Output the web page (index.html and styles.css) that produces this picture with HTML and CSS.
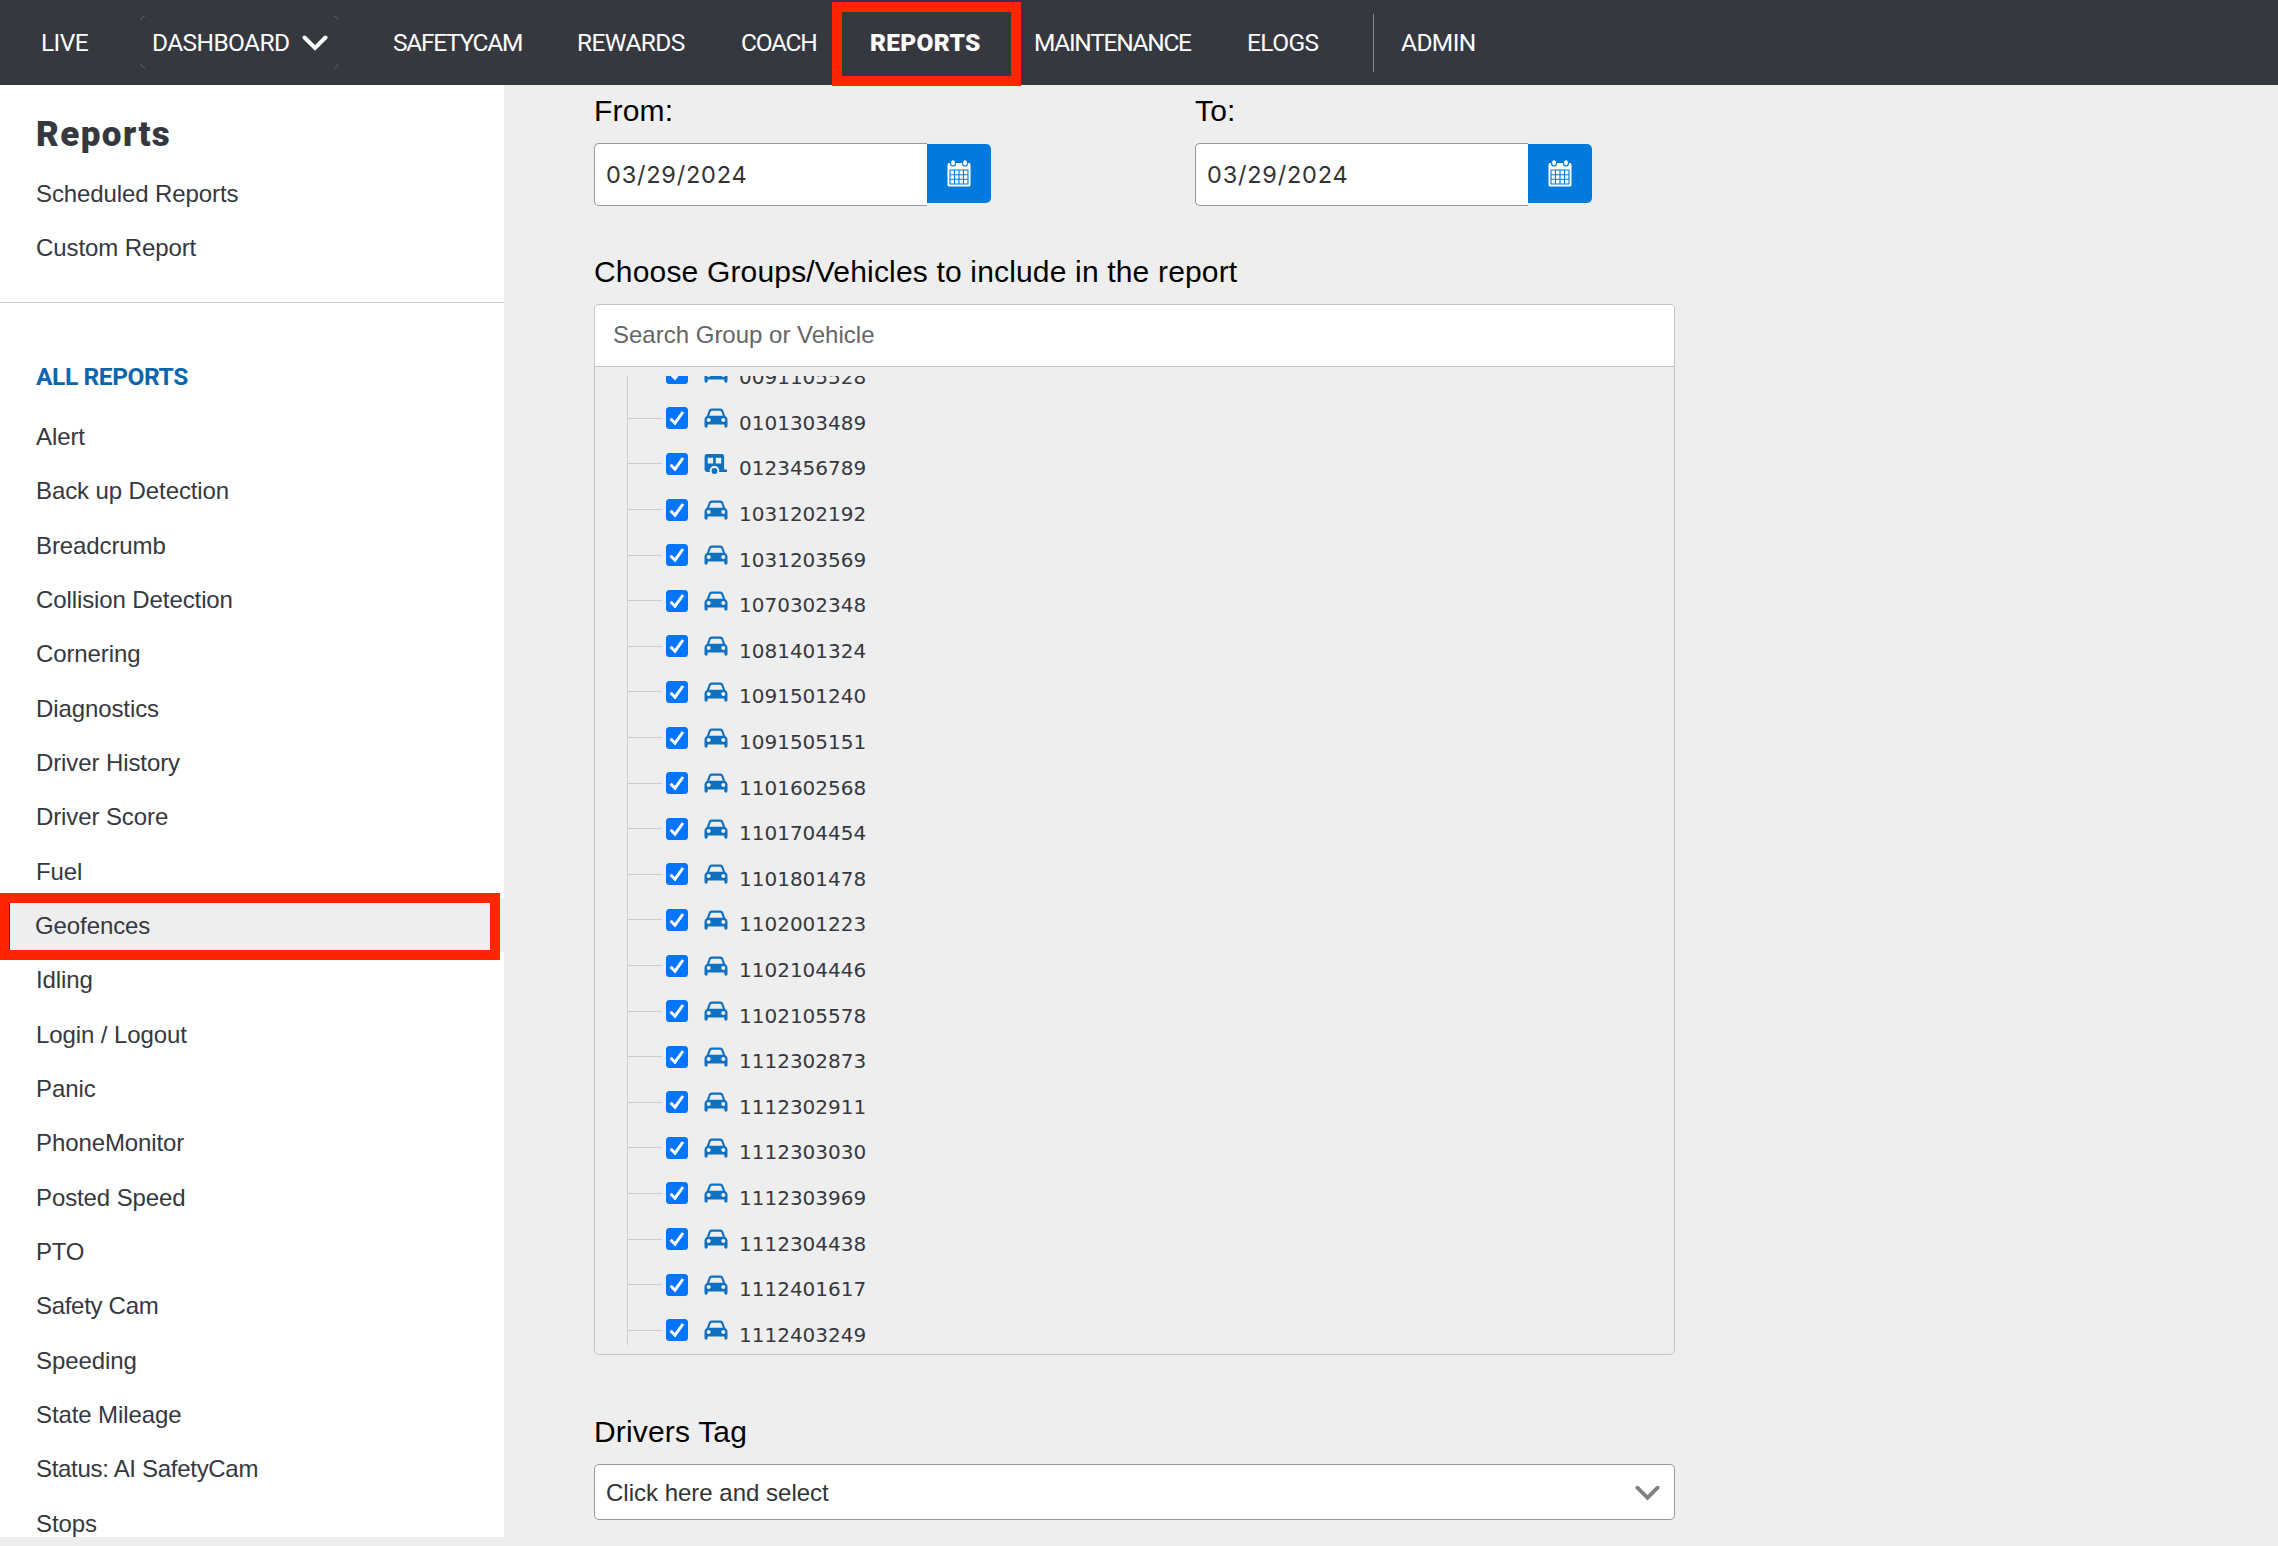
FILE: index.html
```html
<!DOCTYPE html>
<html lang="en">

<head>
    <meta charset="UTF-8">
    <meta name="viewport" content="width=device-width, initial-scale=1.0">
    <title>Geofences Report</title>
    <link rel="stylesheet" href="styles.css">
</head>

<body>
    <!-- shared icons -->
    <svg class="icon-defs">
        <symbol id="icon-check" viewBox="0 0 22 22">
            <rect width="22" height="22" rx="3.5" fill="#0075ff"/>
            <path d="M4.6 11.8 L9 16.2 L17 5" fill="none" stroke="#fff" stroke-width="3"/>
        </symbol>
        <symbol id="icon-car" viewBox="0 0 24 20">
            <path fill-rule="evenodd" fill="#0e70c0" d="M7.500 0.500 h9 q2 0 2.700 1.900 l2 5.600 q2.300 1 2.300 3.500 v6.500 q0 1.700 -1.600 1.700 t-1.600 -1.700 v-1.600 H3.700 v1.600 q0 1.700 -1.600 1.700 T0.500 18 v-6.500 q0 -2.500 2.300 -3.500 l2 -5.600 Q5.500 0.500 7.500 0.500 z M7.700 2.700 q-0.700 0 -1 0.700 L5.100 7.700 h13.800 l-1.600 -4.300 q-0.300 -0.700 -1 -0.700 z M4.700 10 a2 2 0 1 0 0.010 0 z M19.300 10 a2 2 0 1 0 0.010 0 z"/>
        </symbol>
        <symbol id="icon-trailer" viewBox="0 0 24 21">
            <path fill-rule="evenodd" fill="#0e70c0" d="M2.500 0 h15.500 q2.500 0 2.500 2.500 v13.700 h3 v2.600 h-8.300 a5 5 0 1 0 -9.600 0 h-3.100 q-2.500 0 -2.500 -2.500 v-13.800 q0 -2.500 2.500 -2.500 z M3.300 4 v6 h5.700 v-6 z M11.800 4 v6 h5.700 v-6 z"/>
            <circle cx="10.400" cy="17.800" r="3.100" fill="#0e70c0"/>
        </symbol>
        <symbol id="icon-calendar" viewBox="0 0 24 27">
            <path fill="#fff" d="M2 3 h20 q1.500 0 1.500 1.500 v20.500 q0 1.500 -1.500 1.500 h-20 q-1.500 0 -1.500 -1.500 v-20.500 q0 -1.500 1.500 -1.500 z"/>
            <circle cx="6" cy="3.700" r="2.900" fill="#007add"/>
            <circle cx="18" cy="3.700" r="2.900" fill="#007add"/>
            <rect x="4.200" y="0.200" width="3.600" height="5.400" rx="1.800" fill="#fff"/>
            <rect x="16.200" y="0.200" width="3.600" height="5.400" rx="1.800" fill="#fff"/>
            <path fill="none" stroke="#007add" stroke-width="1.100" d="M3 10 h18 v14 h-18 z M7.500 10 v14 M12 10 v14 M16.500 10 v14 M3 14.700 h18 M3 19.300 h18"/>
        </symbol>
        <symbol id="icon-down" viewBox="0 0 26 16">
            <path d="M2.500 2.500 L13 13 L23.500 2.500" fill="none" stroke="currentColor" stroke-width="4" stroke-linecap="round"/>
        </symbol>
    </svg>

    <header class="navbar">
        <a class="nav-link">LIVE</a>
        <a class="nav-link dashboard">DASHBOARD
            <svg class="nav-arrow"><use href="#icon-down"/></svg>
            <svg class="corners" viewBox="0 0 199 54"><path d="M1 5 q0 -3 4 -4 M194 1 q4 1 4 4 M198 49 q0 3 -4 4 M5 53 q-4 -1 -4 -4"/></svg>
        </a>
        <a class="nav-link tight">SAFETYCAM</a>
        <a class="nav-link">REWARDS</a>
        <a class="nav-link tight">COACH</a>
        <a class="nav-link active">REPORTS</a>
        <a class="nav-link tight">MAINTENANCE</a>
        <a class="nav-link">ELOGS</a>
        <a class="nav-link admin">ADMIN</a>
    </header>

    <div class="page">
        <aside class="sidebar">
            <div class="sidebar-top">
                <h1>Reports</h1>
                <a class="side-link">Scheduled Reports</a>
                <a class="side-link">Custom Report</a>
            </div>
            <h2>ALL REPORTS</h2>
            <nav class="report-list">
                <a class="side-link">Alert</a>
                <a class="side-link">Back up Detection</a>
                <a class="side-link">Breadcrumb</a>
                <a class="side-link">Collision Detection</a>
                <a class="side-link">Cornering</a>
                <a class="side-link">Diagnostics</a>
                <a class="side-link">Driver History</a>
                <a class="side-link">Driver Score</a>
                <a class="side-link">Fuel</a>
                <a class="side-link selected">Geofences</a>
                <a class="side-link">Idling</a>
                <a class="side-link">Login / Logout</a>
                <a class="side-link">Panic</a>
                <a class="side-link">PhoneMonitor</a>
                <a class="side-link">Posted Speed</a>
                <a class="side-link tight">PTO</a>
                <a class="side-link tight">Safety Cam</a>
                <a class="side-link">Speeding</a>
                <a class="side-link">State Mileage</a>
                <a class="side-link tight">Status: AI SafetyCam</a>
                <a class="side-link">Stops</a>
            </nav>
        </aside>

        <main class="content">
            <div class="dates">
                <div class="date-field">
                    <label>From:</label>
                    <div class="date-input">
                        <span class="date-value">03/29/2024</span>
                        <button class="date-btn"><svg><use href="#icon-calendar"/></svg></button>
                    </div>
                </div>
                <div class="date-field">
                    <label>To:</label>
                    <div class="date-input">
                        <span class="date-value">03/29/2024</span>
                        <button class="date-btn"><svg><use href="#icon-calendar"/></svg></button>
                    </div>
                </div>
            </div>

            <label class="choose">Choose Groups/Vehicles to include in the report</label>
            <div class="picker">
                <div class="search">Search Group or Vehicle</div>
                <div class="tree" id="tree"></div>
            </div>

            <label class="tag-label">Drivers Tag</label>
            <div class="select">
                <span>Click here and select</span>
                <svg class="select-arrow"><use href="#icon-down"/></svg>
            </div>
        </main>
    </div>

    <script>
        const vehicles = [
            "0091105528", "0101303489", "0123456789", "1031202192", "1031203569",
            "1070302348", "1081401324", "1091501240", "1091505151", "1101602568",
            "1101704454", "1101801478", "1102001223", "1102104446", "1102105578",
            "1112302873", "1112302911", "1112303030", "1112303969", "1112304438",
            "1112401617", "1112403249"
        ];
        const trailers = ["0123456789"];

        const tree = document.getElementById('tree');

        vehicles.forEach(id => {
            const icon = trailers.includes(id) ? 'trailer' : 'car';
            tree.innerHTML += `
                <div class="row">
                    <span class="branch"></span>
                    <svg class="check"><use href="#icon-check"/></svg>
                    <svg class="vehicle"><use href="#icon-${icon}"/></svg>
                    <span class="vehicle-id">${id}</span>
                </div>`;
        });
    </script>
</body>

</html>
```
FILE: styles.css
```css
*,
*::after {
    margin: 0;
    padding: 0;
    box-sizing: border-box;
}

body {
    font-family: 'Liberation Sans', Arial, sans-serif;
    font-size: 24px;
    background: #eee;
    color: #363840;
    height: 1546px;
    overflow: hidden;
}

.icon-defs {
    display: none;
}

/* top navigation */
.navbar {
    height: 85px;
    background: #363840;
    color: #fff;
    padding-left: 41px;
    display: grid;
    grid-template-columns: 111px 241px 184px 164px 129px 164px 213px 126px 200px;
    align-items: center;
}

.nav-link {
    font-family: Roboto, sans-serif;
    font-size: 24.5px;
    letter-spacing: -0.6px;
    white-space: nowrap;
}

.nav-link.tight {
    letter-spacing: -1.3px;
}

.dashboard {
    position: relative;
    display: flex;
    align-items: center;
}

.nav-arrow {
    width: 26px;
    height: 16px;
    margin-left: 13px;
}

.corners {
    position: absolute;
    left: -12px;
    top: -13px;
    width: 199px;
    height: 54px;
    fill: none;
    stroke: #5d5f66;
}

.nav-link.active {
    position: relative;
    font-weight: 900;
    letter-spacing: 0.3px;
}

/* red frame over the active tab */
.active::after {
    content: "";
    position: absolute;
    left: -38px;
    top: -26px;
    width: 189px;
    height: 84px;
    border: 10px solid #ff2600;
}

.admin {
    height: 58px;
    line-height: 58px;
    border-left: 1px solid #85868b;
    padding-left: 27px;
}

.page {
    display: flex;
    align-items: flex-start;
}

/* sidebar */
.sidebar {
    width: 504px;
    height: 1452px;
    background: #fff;
    flex-shrink: 0;
    overflow: hidden;
}

.sidebar-top {
    height: 218px;
    padding-top: 28px;
    border-bottom: 1px solid #ccc;
}

h1 {
    font-family: Roboto, sans-serif;
    font-weight: 900;
    font-size: 35px;
    letter-spacing: 1.4px;
    line-height: 44px;
    padding: 0 36px 9px;
}

h2 {
    font-family: Roboto, sans-serif;
    font-size: 24.5px;
    letter-spacing: -0.4px;
    line-height: 30px;
    color: #0b67ad;
    padding: 59px 36px 17px;
}

.side-link {
    display: block;
    height: 54.33px;
    line-height: 56px;
    padding-left: 36px;
    letter-spacing: -0.1px;
}

.side-link.tight {
    letter-spacing: -0.3px;
}

.report-list .side-link {
    line-height: 55.5px;
}

.report-list .selected {
    position: relative;
    background: #eee;
    border-left: 10px solid #363840;
    padding-left: 25px;
}

.selected::after {
    content: "";
    position: absolute;
    left: -11px;
    top: -5px;
    width: 501px;
    height: 67px;
    border: 10px solid #ff2600;
}

/* report form */
.content {
    padding-left: 90px;
    width: 1171px;
}

label {
    display: block;
    color: #000;
    font-size: 30px;
    line-height: 40px;
    letter-spacing: 0.17px;
}

.dates {
    display: flex;
    gap: 204px;
    padding-top: 6px;
}

.date-input {
    display: flex;
    margin-top: 12px;
}

.date-value {
    width: 333px;
    height: 63px;
    line-height: 61px;
    background: #fff;
    border: 1px solid #999;
    border-right: none;
    border-radius: 5px 0 0 5px;
    padding-left: 11px;
    font-family: Inter, sans-serif;
    font-size: 23.5px;
    letter-spacing: 0.8px;
    color: #333;
}

.date-btn {
    width: 64px;
    height: 59px;
    margin-top: 1px;
    border: none;
    border-radius: 0 5px 5px 0;
    background: #007add;
    display: flex;
    align-items: center;
    justify-content: center;
}

.date-btn svg {
    width: 24px;
    height: 27px;
}

.choose {
    margin: 46px 0 12px;
}

.picker {
    height: 1051px;
    border: 1px solid #c5c5c5;
    border-radius: 5px;
    overflow: hidden;
}

.search {
    height: 62px;
    line-height: 59px;
    background: #fff;
    border-bottom: 1px solid #c5c5c5;
    padding-left: 18px;
    color: #666;
}

/* scrolled part way down, so the first row is cut */
.tree {
    height: 969px;
    margin: 9px 0 0 32px;
    overflow: hidden;
    border-left: 1px solid #ccc;
}

.row {
    height: 45.6px;
    display: flex;
    align-items: center;
}

.row:first-child {
    margin-top: -26px;
}

.branch {
    width: 34px;
    height: 1px;
    background: #ccc;
    margin-right: 4px;
}

.check {
    width: 22px;
    height: 22px;
    margin-right: 16px;
}

.vehicle {
    width: 24px;
    height: 20px;
    margin-right: 11px;
    overflow: visible;
}

.vehicle-id {
    font-family: 'DejaVu Sans', sans-serif;
    font-size: 20px;
    line-height: 16px;
    padding-top: 9px;
}

.tag-label {
    margin: 57px 0 12px;
}

.select {
    height: 56px;
    background: #fff;
    border: 1px solid #999;
    border-radius: 5px;
    padding: 1px 14px 0 11px;
    display: flex;
    align-items: center;
    justify-content: space-between;
    color: #333;
}

.select-arrow {
    width: 25px;
    height: 16px;
    color: #808080;
}
```
